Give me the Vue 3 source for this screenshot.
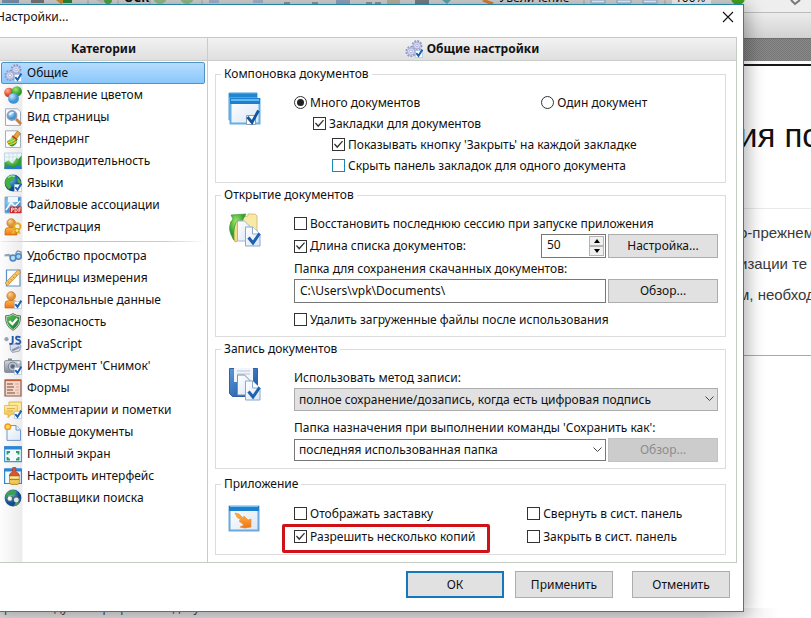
<script setup>
import { reactive, ref } from 'vue'

const badge =
  '<path d="M10.5 10.5h7v7h-7z" fill="#fff" stroke="#a9c3dc" stroke-width=".7"/><path d="M11.3 13.2l2.2 2.6L17.4 9.6" fill="none" stroke="#1c5fae" stroke-width="1.9"/>'

const gears =
  '<g fill="none" stroke="#8f97c6"><circle cx="12" cy="5.5" r="4.5" stroke-width="1.8" stroke-dasharray="1.8 1.2"/><circle cx="6" cy="11.5" r="4.7" stroke-width="1.8" stroke-dasharray="1.8 1.2"/></g><circle cx="12" cy="5.5" r="3.5" fill="#d5d9f0" stroke="#a5abd3"/><circle cx="6" cy="11.5" r="3.7" fill="#d5d9f0" stroke="#a5abd3"/><circle cx="12" cy="5.5" r="1.2" fill="#fff" stroke="#8890c0" stroke-width=".6"/><circle cx="6" cy="11.5" r="1.4" fill="#fff" stroke="#8890c0" stroke-width=".6"/>' +
  badge

const person =
  '<path d="M1 17v-4q0-3.4 3.4-3.4h5.2q3.4 0 3.4 3.4v4z" fill="url(#g-orange)" stroke="#c9680d" stroke-width=".7"/><circle cx="7.2" cy="5" r="4.3" fill="url(#g-skin)" stroke="#bd7423" stroke-width=".7"/>'

const groups = [
  [
    { id: 'general', label: 'Общие', icon: gears },
    {
      id: 'color',
      label: 'Управление цветом',
      icon: '<circle cx="5" cy="6.5" r="4.8" fill="url(#g-red)"/><circle cx="12.8" cy="5.4" r="5.2" fill="url(#g-green)"/><circle cx="9.500" cy="12.4" r="5.400" fill="url(#g-sky)"/>'
    },
    {
      id: 'view',
      label: 'Вид страницы',
      icon: '<path d="M1.5.8h12l3 3v13.6h-15z" fill="#fdfdff" stroke="#9caac0"/><path d="M12 11l5 5" stroke="#d27d35" stroke-width="3"/><circle cx="8" cy="7.5" r="4.7" fill="url(#g-sky)" stroke="#8f9cae" stroke-width="1.5"/><path d="M5.5 7q1-3 4-2.3" fill="none" stroke="#fff" stroke-width="1.2"/>'
    },
    {
      id: 'render',
      label: 'Рендеринг',
      icon: '<path d="M1.5.8h12l3 3v13.6h-15z" fill="#fdfdff" stroke="#a4afbd"/><path d="M13.2 1.2l3.4 2.3-4.3 5.6-3.2-2.5z" fill="#e7a637" stroke="#b37316" stroke-width=".7"/><path d="M8.2 5.8l5 4q.4 4.8-4.8 6.7Q4 16 3 11.2q3.500-1.200 5.200-5.400z" fill="url(#g-green)"/><path d="M4 12.500q4.300.2 7.700-3.800M5.300 14.700q4.200-.3 7.200-3.400" fill="none" stroke="#f3cb30" stroke-width="1.300"/><path d="M8.200 5.800l5 4" stroke="#c13f20" stroke-width="1.500"/>'
    },
    {
      id: 'perf',
      label: 'Производительность',
      icon: '<path d="M.5 1h17v16H.5z" fill="#edf6fb" stroke="#a9c4dc" stroke-width=".7"/><path d="M1 5h16M1 9h16M5 1v11M9 1v11M13 1v11" stroke="#bcd7e6" stroke-width=".6"/><path d="M.5 10.500l4-2 4 3 4-5.500 2 1 3-3.500V17H.5z" fill="url(#g-green)"/><path d="M.5 15l5-1 4 1.300 4-1.500 4 .5V17H.5z" fill="#2c78cf"/>'
    },
    {
      id: 'lang',
      label: 'Языки',
      icon:
        '<circle cx="9" cy="9" r="8.400" fill="url(#g-blue)"/><path d="M2.500 4Q6 0 10.500 1.200q1.300 2.600-1.200 3.500-.5 2.800-3 3.200-1.200 2.400 1 4.100-.5 3-2.500 3.200Q-.8 10.500 2.500 4zM13 3.500q4.500 2.800 4 7l-3.300-2.200z" fill="#46b13a"/><path d="M4 3.500Q7 1 11 2.300" fill="none" stroke="#b9f1c1" stroke-width="1"/>' +
        badge
    },
    {
      id: 'files',
      label: 'Файловые ассоциации',
      icon: '<path d="M1 1h16v16H1z" fill="url(#g-sky)" stroke="#94aec8"/><path d="M4 1h10v5H4z" fill="#eff6fc"/><path d="M2 14L7 6.500l4 4L16 5" fill="none" stroke="#f4fafe" stroke-width="1.500"/><path d="M6 10.500h11.500v6.500H6z" fill="#c92c2e"/><path d="M7.500 16v-4H9q1 1.100 0 2H7.500m3.500-2v4q2.300 0 2.300-2T11 12m4 4v-4h2m-2 2h1.500" fill="none" stroke="#fff" stroke-width=".8"/>'
    },
    {
      id: 'register',
      label: 'Регистрация',
      icon:
        person +
        '<circle cx="13.300" cy="8.500" r="3.200" fill="none" stroke="#e0ad1a" stroke-width="2"/><path d="M11.700 11l-3.500 4.500M13.300 11.500l2.500 4.200" stroke="#e9bb28" stroke-width="2.200"/><circle cx="13" cy="12.500" r="2" fill="#ffe36a" stroke="#b58309" stroke-width=".7"/>'
    }
  ],
  [
    {
      id: 'access',
      label: 'Удобство просмотра',
      icon: '<path d="M.5 8.500l4-.5 3 1.500 5-1" fill="none" stroke="#93a0b0" stroke-width="2.200"/><circle cx="9" cy="11" r="2.900" fill="#b6dcf5" stroke="#4a86bd" stroke-width="1.500"/><circle cx="14.500" cy="9.500" r="2.800" fill="#9fd1f3" stroke="#4a86bd" stroke-width="1.500"/><path d="M11.500 7l2-3 3.500 1v3" fill="none" stroke="#6b8fb1" stroke-width="1.300"/>'
    },
    {
      id: 'units',
      label: 'Единицы измерения',
      icon: '<path d="M2.500 1h13.500v16H2.500z" fill="#fff" stroke="#5c8fc5" stroke-width="1.200"/><path d="M14 .8l2.700 2.300L3.700 16.500 1 14z" fill="#f5c265" stroke="#c98b34" stroke-width=".8"/><path d="M4 12.500l1.500 1.400M6.500 10l1.500 1.500M9 7.700l1.500 1.500M11.500 5.300L13 6.800" stroke="#9e6512" stroke-width=".6"/>'
    },
    { id: 'personal', label: 'Персональные данные', icon: person + badge },
    {
      id: 'security',
      label: 'Безопасность',
      icon: '<path d="M9 .6q3.500 2.300 7.500 2.200.6 10.400-7.500 14.600Q.9 13.200 1.500 2.800 5.500 2.900 9 .6z" fill="#d5e0d5" stroke="#566b5d" stroke-width=".9"/><path d="M9 1.800q3.200 2 6.500 2.100.1 8.400-6.500 12.300Q2.400 12.300 2.500 3.900 5.800 3.800 9 1.800z" fill="url(#g-shield)"/><path d="M5.400 8l3 3.200 4.700-5.600" fill="none" stroke="#fff" stroke-width="2.200"/>'
    },
    {
      id: 'js',
      label: 'JavaScript',
      icon: '<path d="M6 9.500l9-1 2 2.500-1.500 5-7 1.500-2-2z" fill="#d8dde8" stroke="#8a93a9" stroke-width=".8"/><path d="M8 15.500l7.500-3.500" stroke="#8994ad" stroke-width="2"/><circle cx="2.500" cy="4.200" r="2.100" fill="#96a3bb"/><path d="M8.700 1v6q0 2.500-3.400 1.700M16.500 2.300Q11.800.6 12 3.300q.1 1.200 2.400 1.700 2.500.7 1.800 2.600-1 1.900-4.600.5" fill="none" stroke="#2559ad" stroke-width="1.900"/>'
    },
    {
      id: 'snapshot',
      label: "Инструмент 'Снимок'",
      icon:
        '<rect x=".5" y="3.500" width="16.500" height="12" rx="1.500" fill="url(#g-steel)" stroke="#7c8692" stroke-width=".8"/><path d="M4 3.500V1.500h4v2" fill="#828d9b"/><circle cx="8.700" cy="9.500" r="4.400" fill="#bcc4cf" stroke="#7a8490"/><circle cx="8.700" cy="9.500" r="2.300" fill="#5a687c"/><path d="M13.500 5.500h2" stroke="#fff" stroke-width="1.200"/>' +
        badge
    },
    {
      id: 'forms',
      label: 'Формы',
      icon: '<path d="M1 1h16v16H1z" fill="#f3d7c9" stroke="#8b5c4c" stroke-width="1.200"/><path d="M1 1.300h16" stroke="#c75e3b" stroke-width="1.600"/><path d="M3 5h6M3 8h7M3 11h6M3 14h8" stroke="#7d4a40" stroke-width="1.200"/><path d="M11 5h4M12 8h3M11 11h4M12.500 14H15" stroke="#d9a898" stroke-width="1.200"/>'
    },
    {
      id: 'comments',
      label: 'Комментарии и пометки',
      icon:
        '<path d="M5 1h12.500v9H15v3l-3.500-3H5z" fill="#ffe79a" stroke="#dba92f" stroke-width=".8"/><path d="M.6 4.500h12.700v8.700H7.500L4 16.800v-3.600H.6z" fill="url(#g-yellow)" stroke="#e2b343" stroke-width=".8"/><path d="M3 7.500h8M3 10h6" stroke="#d9b25a"/>' +
        badge
    },
    {
      id: 'new',
      label: 'Новые документы',
      icon: '<path d="M3 2.500h9l4.500 4.500v10.400H3z" fill="url(#g-paper)" stroke="#6e99ca"/><path d="M12 2.500V7h4.500" fill="#e5effa" stroke="#6e99ca"/><circle cx="3.800" cy="3.800" r="2.800" fill="#ffdb5d" stroke="#ef9a20" stroke-width="1.500"/>'
    },
    {
      id: 'full',
      label: 'Полный экран',
      icon: '<path d="M.6 1.600h16.800v15H.6z" fill="#f4fbff" stroke="#4d93d3" stroke-width="1.200"/><path d="M.6 1.500h16.800v3H.6z" fill="#2c86d8"/><path d="M3.500 9.500V7H6M12 7h2.500v2.500M14.500 12v2.500H12M6 14.500H3.500V12" fill="none" stroke="#2c9c68" stroke-width="1.900"/>'
    },
    {
      id: 'customize',
      label: 'Настроить интерфейс',
      icon: '<path d="M.6 2h16.800v14.500H.6z" fill="#f4fbff" stroke="#3585cf" stroke-width="1.200"/><path d="M.6 1.500h16.800v3H.6z" fill="#2c86d8"/><path d="M8.700.4q1.700-.8 3.200 0v4.600q3.600.8 3.600 4H5.300q0-3.200 3.400-4z" fill="#d85731" stroke="#9c361b" stroke-width=".6"/><path d="M5.500 9h9.800v6.500q-.4 2-2 2H7.500q-1.600 0-2-2z" fill="url(#g-yellow)" stroke="#a77613" stroke-width=".7"/><path d="M5.500 12.500h9.800" stroke="#b5801a" stroke-width="1.300"/>'
    },
    {
      id: 'search',
      label: 'Поставщики поиска',
      icon: '<circle cx="9" cy="9" r="8.400" fill="url(#g-blue)"/><path d="M2.500 4Q7-.5 13 2.500L10 6H5l-3 4zM12 12l4 1q-2 4-6 4z" fill="#3da051"/><path d="M2.500 8l4-1.500 3 1.500 3-1 4 3-2 4-4-1-1.500-2.500L7 13l-3.500-1z" fill="#58656e"/><circle cx="5.800" cy="9.500" r="2.200" fill="#edf4f4"/><circle cx="12.300" cy="11" r="2.400" fill="#dce8ec"/>'
    }
  ]
]

const sheet = '<path d="M17.500 14h7l7.500 7v12H17.500z" fill="url(#g-paper)" stroke="#8aa9cc"/><path d="M24.500 14v7h7" fill="#fff" stroke="#8aa9cc"/><path d="M20.500 24.500l4.500 5.500L31.500 20.500" fill="none" stroke="#1c62b1" stroke-width="3"/>'
const art = {
  layout:
    '<path d="M1 1h28v27H1z" fill="#7cc6f3" stroke="#4f9fd6"/><path d="M1 1.500h28v4H1z" fill="#1f86d0"/><path d="M2.500 7h29v24.500h-29z" fill="url(#g-paper)" stroke="#62b0e4" stroke-width="2"/><path d="M2 6h30v6H2z" fill="#1c80cf"/><path d="M3 7h28v2H3z" fill="#61baf1"/><path d="M18.500 23.500h9v9h-9z" fill="#fff" stroke="#8b9dad"/><path d="M19.500 25l4.500 5.500L30.500 18.500" fill="none" stroke="#12549e" stroke-width="2.800"/>',
  open:
    '<path d="M15 4l5-1V1h7l2 2v17H15z" fill="#fae8a5" stroke="#d8c178"/><path d="M2.500 9l7-4 5 1v18l-7 5-2.500-3z" fill="#f5dc85" stroke="#cda545"/><path d="M6 27Q-1 17 3 9L5 6 3 2l15-1-5 9-3-3q-5 4-4 20z" fill="url(#g-green)" stroke="#3c9c38" stroke-width=".7"/><path d="M9.500 8h7l6 6v14h-13z" fill="url(#g-paper)" stroke="#9fb8d6"/>' +
    sheet,
  save:
    '<path d="M1.500 1.500h28v28h-25l-3-3z" fill="url(#g-disk)" stroke="#2d62a5"/><path d="M6 1h19v14H6z" fill="#f2f5fb"/><path d="M9 4h13M9 7h13" stroke="#b8c4d7"/><path d="M9.500 8h7l6 6v14h-13z" fill="url(#g-paper)" stroke="#8292ac"/>' +
    sheet,
  app:
    '<path d="M1.500 4.500h29v24h-29z" fill="url(#g-paper)" stroke="#6aa9d9" stroke-width="2"/><path d="M1 4h30v5H1z" fill="#1d7fcd"/><path d="M2 4.500h28" stroke="#75c2f3"/><path d="M7 11l4 1 4 4 1-2 4 4 3-1v8q-7 2-11 0l4-2-5-4 2-1-4-3z" fill="url(#g-orange)" stroke="#e8913a" stroke-width=".7"/>'
}

const active = ref('general')
const form = reactive({
  mode: 'many',
  tabs: true,
  closeButton: true,
  hidePanel: false,
  restore: false,
  limit: true,
  count: 50,
  folder: 'C:\\Users\\vpk\\Documents\\',
  removeFiles: false,
  splash: false,
  multiple: true,
  minimizeTray: false,
  closeTray: false
})
</script>

<template>
  <main class="desktop">
    <svg class="defs" aria-hidden="true">
      <defs>
        <radialGradient id="g-red" cx=".35" cy=".3"><stop stop-color="#ffb398" /><stop offset="1" stop-color="#dd4420" /></radialGradient>
        <radialGradient id="g-green" cx=".4" cy=".3"><stop stop-color="#a3e865" /><stop offset="1" stop-color="#2e9d34" /></radialGradient>
        <radialGradient id="g-sky" cx=".35" cy=".3"><stop stop-color="#c5e8fd" /><stop offset="1" stop-color="#4093d4" /></radialGradient>
        <radialGradient id="g-blue" cx=".35" cy=".3"><stop stop-color="#68c7e9" /><stop offset="1" stop-color="#124c91" /></radialGradient>
        <radialGradient id="g-skin" cx=".35" cy=".3"><stop stop-color="#fcd393" /><stop offset="1" stop-color="#df9138" /></radialGradient>
        <linearGradient id="g-orange" x2="0" y2="1"><stop stop-color="#ffb445" /><stop offset="1" stop-color="#ed7418" /></linearGradient>
        <linearGradient id="g-shield" x2="1" y2="1"><stop stop-color="#61c558" /><stop offset="1" stop-color="#127529" /></linearGradient>
        <linearGradient id="g-steel" x2="0" y2="1"><stop stop-color="#d0d6dd" /><stop offset="1" stop-color="#7f8996" /></linearGradient>
        <linearGradient id="g-yellow" x2="0" y2="1"><stop stop-color="#fff0a8" /><stop offset="1" stop-color="#f0b732" /></linearGradient>
        <linearGradient id="g-paper" x2="1" y2="1"><stop stop-color="#ffffff" /><stop offset="1" stop-color="#dbe6f7" /></linearGradient>
        <linearGradient id="g-disk" x2="1" y2="1"><stop stop-color="#5b99dc" /><stop offset="1" stop-color="#164d9b" /></linearGradient>
      </defs>
    </svg>

    <div class="viewer">
      <div class="tools">
        <svg class="tool-art" viewBox="0 0 811 12" width="811" height="12" aria-hidden="true">
          <path d="M2 0h17v3H2z" fill="#7b91ac" /><path d="M31 0h13v3H31z" fill="#777" />
          <path d="M56 0l5 4 6-4z" fill="#d18c23" /><path d="M63 0h9v3h-9z" fill="#2e8738" />
          <path d="M88 0v5M118 0v5M150 0v5M202 0v5M584 0v5M665 0v5" stroke="#aaa" />
          <path d="M96 0l6 3 4-3z" fill="#bbb" /><circle cx="108" cy="0" r="4" fill="#4ba544" />
          <circle cx="160" cy="-3" r="7" fill="#91bd87" /><circle cx="187" cy="-3" r="7" fill="#91bd87" />
          <path d="M209 0h10v3h-10zM253 0h10v3h-10z" fill="#a5b4ca" />
          <path d="M284 3h6M312 3h6M366 3h6M375 3h6" stroke="#555" /><path d="M336 0h14v4h-14z" fill="#8ea5bf" />
          <path d="M387 0h13v4h-13z" fill="#b9b29b" /><path d="M415 0h14v4h-14z" fill="#777f88" />
          <path d="M442 0l5 4 4-4z" fill="#58a7b5" /><path d="M483 0l10 4" stroke="#db7f35" stroke-width="3" />
          <path d="M591 0h14v3h-14zM617 0h14v3h-14zM643 0h14v3h-14z" fill="#eef5fc" stroke="#86a6ca" />
          <path d="M672 0h39v4h-39z" fill="#f5f5f5" /><circle cx="738" cy="-2" r="7" fill="#43a51e" />
          <path d="M791 0l4 4 5-4" fill="none" stroke="#777" stroke-width="2" />
        </svg>
        <span class="tool-label ocr">OCR</span>
        <span class="tool-label zoom-in">Увеличение</span>
        <span class="tool-label percent">100%</span>
      </div>
      <div class="tabs"></div>
      <div class="ruler"></div>
      <article class="sheet">
        <div class="excerpt">
          <h1>ия по</h1>
          <p>о-прежнем<br />изации те<br />м, необход</p>
        </div>
      </article>
      <div class="below"></div>
      <footer class="status">рекомендуется при работе с документами</footer>
    </div>

    <section class="dialog" role="dialog" aria-labelledby="dialog-title">
      <header class="titlebar">
        <span id="dialog-title">Настройки...</span>
        <button class="close" type="button" aria-label="Закрыть">
          <svg viewBox="0 0 12 12" width="12" height="12"><path d="M1 1l10 10M11 1L1 11" stroke="#111" stroke-width="1.100" /></svg>
        </button>
      </header>

      <div class="columns">
        <nav class="sidebar" aria-label="Категории">
          <h2 class="heading">Категории</h2>
          <div class="categories">
            <ul v-for="(group, index) in groups" :key="index">
              <li v-for="item in group" :key="item.id">
                <button class="category" type="button" :class="{ active: active === item.id }" @click="active = item.id">
                  <svg viewBox="0 0 18 18" width="18" height="18" aria-hidden="true" v-html="item.icon"></svg>
                  <span>{{ item.label }}</span>
                </button>
              </li>
            </ul>
          </div>
        </nav>

        <form class="panel" @submit.prevent>
          <h2 class="heading">
            <svg viewBox="0 0 18 18" width="18" height="18" aria-hidden="true" v-html="gears"></svg>
            Общие настройки
          </h2>
          <div class="sections">
            <fieldset>
              <legend>Компоновка документов</legend>
              <div class="section">
                <svg class="art" viewBox="0 0 34 34" width="34" height="34" aria-hidden="true" v-html="art.layout"></svg>
                <div class="fields">
                  <div class="row pair">
                    <label class="option"><input v-model="form.mode" type="radio" name="mode" value="many" />Много документов</label>
                    <label class="option single"><input v-model="form.mode" type="radio" name="mode" value="one" />Один документ</label>
                  </div>
                  <label class="option level-1"><input v-model="form.tabs" type="checkbox" />Закладки для документов</label>
                  <label class="option level-2"><input v-model="form.closeButton" type="checkbox" />Показывать кнопку 'Закрыть' на каждой закладке</label>
                  <label class="option level-2 hot"><input v-model="form.hidePanel" type="checkbox" />Скрыть панель закладок для одного документа</label>
                </div>
              </div>
            </fieldset>

            <fieldset>
              <legend>Открытие документов</legend>
              <div class="section">
                <svg class="art" viewBox="0 0 34 34" width="34" height="34" aria-hidden="true" v-html="art.open"></svg>
                <div class="fields">
                  <label class="option"><input v-model="form.restore" type="checkbox" />Восстановить последнюю сессию при запуске приложения</label>
                  <div class="row">
                    <label class="option grow"><input v-model="form.limit" type="checkbox" />Длина списка документов:</label>
                    <div class="spinner">
                      <input v-model="form.count" type="number" aria-label="Длина списка документов" />
                      <div class="steps">
                        <button type="button" aria-label="Больше" @click="form.count++"><svg viewBox="0 0 6 4" width="6" height="4"><path d="M0 4l3-4 3 4z" /></svg></button>
                        <button type="button" aria-label="Меньше" @click="form.count--"><svg viewBox="0 0 6 4" width="6" height="4"><path d="M0 0l3 4 3-4z" /></svg></button>
                      </div>
                    </div>
                    <button class="button side" type="button">Настройка...</button>
                  </div>
                  <label class="caption" for="folder">Папка для сохранения скачанных документов:</label>
                  <div class="row">
                    <input id="folder" v-model="form.folder" class="text grow" type="text" />
                    <button class="button side" type="button">Обзор...</button>
                  </div>
                  <label class="option after"><input v-model="form.removeFiles" type="checkbox" />Удалить загруженные файлы после использования</label>
                </div>
              </div>
            </fieldset>

            <fieldset>
              <legend>Запись документов</legend>
              <div class="section">
                <svg class="art" viewBox="0 0 34 34" width="34" height="34" aria-hidden="true" v-html="art.save"></svg>
                <div class="fields">
                  <label class="caption" for="method">Использовать метод записи:</label>
                  <div class="select filled">
                    <select id="method"><option>полное сохранение/дозапись, когда есть цифровая подпись</option></select>
                    <svg viewBox="0 0 9 6" width="9" height="6" aria-hidden="true"><path d="M.5.500l4 4 4-4" /></svg>
                  </div>
                  <label class="caption after" for="target">Папка назначения при выполнении команды 'Сохранить как':</label>
                  <div class="row">
                    <div class="select grow">
                      <select id="target"><option>последняя использованная папка</option></select>
                      <svg viewBox="0 0 9 6" width="9" height="6" aria-hidden="true"><path d="M.5.500l4 4 4-4" /></svg>
                    </div>
                    <button class="button side" type="button" disabled>Обзор...</button>
                  </div>
                </div>
              </div>
            </fieldset>

            <fieldset>
              <legend>Приложение</legend>
              <div class="section">
                <svg class="art" viewBox="0 0 34 34" width="34" height="34" aria-hidden="true" v-html="art.app"></svg>
                <div class="fields application">
                  <label class="option"><input v-model="form.splash" type="checkbox" />Отображать заставку</label>
                  <label class="option"><input v-model="form.minimizeTray" type="checkbox" />Свернуть в сист. панель</label>
                  <label class="option marked"><input v-model="form.multiple" type="checkbox" />Разрешить несколько копий</label>
                  <label class="option"><input v-model="form.closeTray" type="checkbox" />Закрыть в сист. панель</label>
                </div>
              </div>
            </fieldset>
          </div>
        </form>
      </div>

      <footer class="actions">
        <button class="button default" type="button">ОК</button>
        <button class="button" type="button">Применить</button>
        <button class="button cancel" type="button">Отменить</button>
      </footer>
    </section>
  </main>
</template>

<style>
body {
  margin: 0;
}
</style>

<style scoped>
* {
  box-sizing: border-box;
}
.desktop {
  position: relative;
  min-height: 100vh;
  overflow: hidden;
  display: flex;
  flex-direction: column;
  font: 12px/16px 'Noto Sans', 'Open Sans', sans-serif;
  color: #111;
}
.defs {
  position: absolute;
  width: 0;
  height: 0;
}
button,
input,
select {
  font: inherit;
  color: inherit;
  margin: 0;
}

/* Document viewer behind the dialog */
.viewer {
  flex: 1;
  display: flex;
  flex-direction: column;
  background: #fff;
}
.tools {
  position: relative;
  height: 12px;
  overflow: hidden;
  background: linear-gradient(90deg, #d2d2d2 740px, #eee 745px);
}
.tool-art {
  display: block;
}
.tool-label {
  position: absolute;
  top: -10px;
  color: #111;
}
.ocr {
  left: 124px;
  font-weight: 700;
}
.zoom-in {
  left: 499px;
}
.percent {
  left: 675px;
}
.tabs {
  height: 26px;
  border-top: 1px solid #bcbcbc;
  background: linear-gradient(#ececec, #d2d2d2);
}
.ruler {
  height: 23px;
  border-top: 1px solid #6d6d6d;
  background: repeating-conic-gradient(#777 0 25%, #898989 0 50%) 0 0 / 2px 2px;
}
.sheet {
  margin-top: 3px;
  height: 292px;
  border-top: 2px solid #1a1a1a;
  border-bottom: 1px solid #aaa;
  overflow: hidden;
}
.excerpt {
  margin-left: calc(100% - 72px);
  white-space: nowrap;
  font-family: 'Liberation Sans', sans-serif;
}
.excerpt h1 {
  margin: 0;
  height: 143px;
  padding-top: 48px;
  border-bottom: 1px solid #e9e9e9;
  font-size: 33px;
  line-height: 44px;
  font-weight: 400;
  color: #111;
}
.excerpt p {
  margin: 8px 0 0;
  font-size: 15px;
  line-height: 31px;
  color: #3a3a3a;
}
.below {
  flex: 1;
}
.status {
  height: 10px;
  padding-left: 4px;
  overflow: hidden;
  line-height: 0;
  color: #444;
  background: linear-gradient(90deg, #dcdcdc 700px, #fff 780px);
}

/* Dialog window */
.dialog {
  position: absolute;
  top: 4px;
  right: 67px;
  bottom: 6px;
  left: -8px;
  display: flex;
  flex-direction: column;
  padding-left: 7px;
  border: 1px solid #2685a6;
  background: #fff;
  box-shadow: 4px 2px 16px rgba(0, 0, 0, 0.3);
}
.titlebar {
  display: flex;
  justify-content: space-between;
  height: 32px;
  padding: 4px 9px 0 0;
}
.titlebar span {
  margin-left: -4px;
}
.close {
  display: flex;
  align-items: center;
  width: 12px;
  height: 16px;
  padding: 0;
  border: 0;
  background: none;
}
.columns {
  flex: 1;
  display: flex;
  margin-right: 6px;
  border: solid #c3cbc3;
  border-width: 1px 1px 1px 0;
}
.heading {
  display: flex;
  align-items: center;
  justify-content: center;
  gap: 4px;
  height: 23px;
  margin: 0;
  border-bottom: 1px solid #c9cec9;
  background: linear-gradient(#f2f2f2, #dfdfdf);
  font-size: 12px;
  font-weight: 700;
}
.sidebar {
  flex: 0 0 208px;
  display: flex;
  flex-direction: column;
  border-right: 1px solid #cbcbcb;
}
.categories {
  flex: 1;
  padding: 1px 2px 0 1px;
  background: linear-gradient(90deg, #fdfdfd, #ececec 22px, #fff 23px);
}
.categories ul {
  margin: 0;
  padding: 0;
  list-style: none;
}
.categories ul + ul {
  margin-top: 3px;
  padding-top: 3px;
  border-top: 1px solid;
  border-image: linear-gradient(90deg, #eee, #bbb 20%, #ccc 80%, #fff) 1;
}
.category {
  display: flex;
  align-items: center;
  gap: 5px;
  width: 100%;
  height: 22px;
  padding: 0 2px;
  border: 1px solid transparent;
  border-radius: 2px;
  background: none;
  text-align: left;
  white-space: nowrap;
}
.category.active {
  border-color: #4d94c3;
  background: linear-gradient(#b6dcfe, #8ac8fb);
}
.panel {
  flex: 1;
  min-width: 0;
}
.sections {
  display: flex;
  flex-direction: column;
  gap: 4px;
  padding: 5px 10px 6px 7px;
}
fieldset {
  min-width: 0;
  margin: 0;
  padding: 0 7px 6px 13px;
  border: 1px solid #dcdcdc;
}
fieldset:last-child {
  margin-top: 3px;
}
legend {
  margin-left: -8px;
  padding: 0 3px;
}
.section {
  display: flex;
  padding-top: 10px;
}
.art {
  flex: none;
  margin-right: 32px;
  margin-left: -1px;
}
.fields {
  flex: 1;
  min-width: 0;
  display: flex;
  flex-direction: column;
}
.row {
  display: flex;
  align-items: center;
  gap: 2px;
}
.grow {
  flex: 1;
  min-width: 0;
}
.pair {
  gap: 0;
}
.pair .option {
  flex: 7;
}
.pair .single {
  flex: 5;
}
.option {
  display: flex;
  align-items: center;
  gap: 3px;
  height: 21px;
  white-space: nowrap;
}
.level-1 {
  padding-left: 19px;
}
.level-2 {
  padding-left: 38px;
}
.after {
  margin-top: 6px;
}
.caption {
  height: 21px;
  line-height: 21px;
}
.option input {
  appearance: none;
  flex: none;
  display: grid;
  place-items: center;
  width: 13px;
  height: 13px;
  border: 1px solid #333;
  background: #fff;
}
.option input[type='radio'] {
  border-radius: 50%;
}
.option input[type='radio']:checked::before {
  content: '';
  width: 7px;
  height: 7px;
  border-radius: 50%;
  background: #222;
}
.option input[type='checkbox']:checked::before {
  content: '';
  width: 9px;
  height: 8px;
  background: #333;
  clip-path: polygon(0 50%, 10% 38%, 36% 70%, 90% 4%, 100% 14%, 36% 96%);
}
.option.hot input {
  border-color: #1b86b8;
}
.button {
  width: 98px;
  height: 27px;
  padding: 0;
  border: 1px solid #adadad;
  background: #e1e1e1;
}
.button.side {
  flex: none;
  width: 110px;
  height: 24px;
}
.button:disabled {
  border-color: #c2c2c2;
  background: #ccc;
  color: #8c8c8c;
}
.button.default {
  border: 2px solid #1478bb;
}
.text {
  height: 24px;
  padding: 0 5px 2px;
  border: 1px solid #777;
  background: #fff;
}
.spinner {
  display: flex;
  width: 65px;
  height: 24px;
  padding: 1px;
  border: 1px solid #777;
}
.spinner input {
  appearance: textfield;
  flex: 1;
  min-width: 0;
  padding: 0 4px 2px;
  border: 0;
  outline: 0;
}
.spinner input::-webkit-inner-spin-button {
  appearance: none;
}
.steps {
  display: flex;
  flex-direction: column;
  width: 15px;
}
.steps button {
  flex: 1;
  display: flex;
  align-items: center;
  justify-content: center;
  min-height: 0;
  padding: 0;
  border: 1px solid #b5b5b5;
  background: #f0f0f0;
}
.select {
  position: relative;
  height: 22px;
}
.select select {
  appearance: none;
  display: block;
  width: 100%;
  height: 100%;
  padding: 0 20px 0 4px;
  border: 1px solid #777;
  border-radius: 0;
  background: #fff;
}
.select.filled {
  height: 23px;
}
.filled select {
  border-color: #adadad;
  background: #e1e1e1;
}
.select svg {
  position: absolute;
  top: 8px;
  right: 4px;
  fill: none;
  stroke: #444;
  pointer-events: none;
}
.application {
  display: grid;
  grid-template-columns: 11fr 9fr;
}
.application .option {
  height: 23px;
}
.marked {
  position: relative;
}
.marked::after {
  content: '';
  position: absolute;
  top: -1px;
  bottom: -5px;
  left: -12px;
  width: 202px;
  border: 3px solid #cf1118;
  border-radius: 2px;
}
.actions {
  display: flex;
  justify-content: flex-end;
  gap: 11px;
  padding: 8px 13px 13px 0;
}
.cancel {
  margin-left: 8px;
}
</style>
